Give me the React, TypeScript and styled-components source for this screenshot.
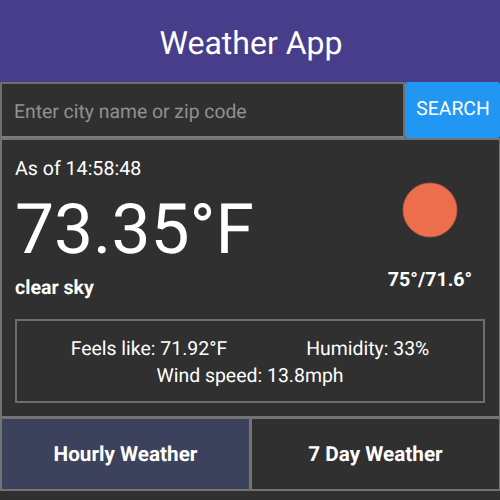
import React from "react";
import styled, { createGlobalStyle } from "styled-components";

const GlobalStyle = createGlobalStyle`
  * { box-sizing: border-box; }
  body {
    margin: 0;
    background: #303030;
    color: #fff;
    font-family: Roboto, "Liberation Sans", sans-serif;
    font-size: 19.6px;
    line-height: 26px;
    text-rendering: geometricPrecision;
  }
`;

const Page = styled.main`
  width: 500px;
  height: 500px;
  overflow: hidden;
  display: flex;
  flex-direction: column;
`;

const Header = styled.header`
  height: 82px;
  flex: none;
  display: flex;
  align-items: center;
  justify-content: center;
  background: #483d8b;
  padding: 4px 0 0 2px;
`;

const Title = styled.h1`
  margin: 0;
  font-size: 32px;
  line-height: 40px;
  font-weight: 400;
`;

const SearchForm = styled.form`
  display: flex;
  height: 56px;
  flex: none;
`;

const SearchInput = styled.input`
  width: 405px;
  height: 56px;
  flex: none;
  padding: 2px 12px 0;
  border: 2px solid #6f6f6f;
  border-bottom-color: #7b7b7b;
  border-radius: 0;
  outline: none;
  background: #303030;
  color: #fff;
  font: inherit;
  font-size: 19.35px;
  text-rendering: inherit;
  &::placeholder {
    color: #919191;
    opacity: 1;
  }
`;

const SearchButton = styled.button`
  flex: 1;
  padding: 0 0 3px 1px;
  border: 0;
  border-radius: 2px;
  background: #2196f3;
  color: #fff;
  font: inherit;
  font-size: 19.35px;
  text-rendering: inherit;
  white-space: nowrap;
`;

const Current = styled.section`
  height: 279px;
  flex: none;
  display: flex;
  flex-direction: column;
  padding: 15px 14px 0 13px;
  border: solid #737373;
  border-width: 2px 1px 1px 2px;
`;

const Summary = styled.div`
  display: flex;
  justify-content: space-between;
  height: 164px;
`;

const Reading = styled.div`
  display: flex;
  flex-direction: column;
`;

const Timestamp = styled.span`
  padding-top: 1px;
`;

const Temperature = styled.div`
  font-size: 69.5px;
  line-height: 82px;
  margin: 7px 0 4px;
  white-space: nowrap;
`;

const Strong = styled.strong`
  font-weight: 700;
`;

const Outlook = styled.div`
  display: flex;
  flex-direction: column;
  align-items: center;
  width: 110px;
  padding-top: 27px;
`;

const Sun = styled.svg`
  width: 56px;
  height: 56px;
  margin-bottom: 29px;
`;

const Details = styled.div`
  height: 84px;
  border: 2px solid #6d6d6d;
  display: flex;
  flex-direction: column;
  align-items: center;
  padding-top: 15px;
  font-size: 19.45px;
`;

const DetailRow = styled.div`
  display: flex;
  gap: 79px;
  line-height: 26.5px;
`;

const Tabs = styled.nav`
  display: flex;
  height: 74px;
  flex: none;
`;

const Tab = styled.button<{ $active?: boolean }>`
  flex: 1;
  padding: 1px 0 0;
  border: solid #737373;
  border-width: 2px 1px 2px 2px;
  background: ${(p) => (p.$active ? "#3d425c" : "#303030")};
  color: #fff;
  font: inherit;
  text-rendering: inherit;
  font-weight: 700;
  font-size: 20.7px;
`;

export default function App() {
  return (
    <Page>
      <GlobalStyle />
      <Header>
        <Title>Weather App</Title>
      </Header>
      <SearchForm onSubmit={(e) => e.preventDefault()}>
        <SearchInput placeholder="Enter city name or zip code" />
        <SearchButton>SEARCH</SearchButton>
      </SearchForm>
      <Current>
        <Summary>
          <Reading>
            <Timestamp>As of 14:58:48</Timestamp>
            <Temperature>73.35°F</Temperature>
            <Strong>clear sky</Strong>
          </Reading>
          <Outlook>
            <Sun viewBox="0 0 56 56">
              <circle cx="28" cy="28" r="27" fill="#ec6e4c" stroke="#b75a43" strokeWidth="0.8" />
            </Sun>
            <Strong>75°/71.6°</Strong>
          </Outlook>
        </Summary>
        <Details>
          <DetailRow>
            <span>Feels like: 71.92°F</span>
            <span>Humidity: 33%</span>
          </DetailRow>
          <DetailRow>
            <span>Wind speed: 13.8mph</span>
          </DetailRow>
        </Details>
      </Current>
      <Tabs>
        <Tab $active>Hourly Weather</Tab>
        <Tab>7 Day Weather</Tab>
      </Tabs>
    </Page>
  );
}
